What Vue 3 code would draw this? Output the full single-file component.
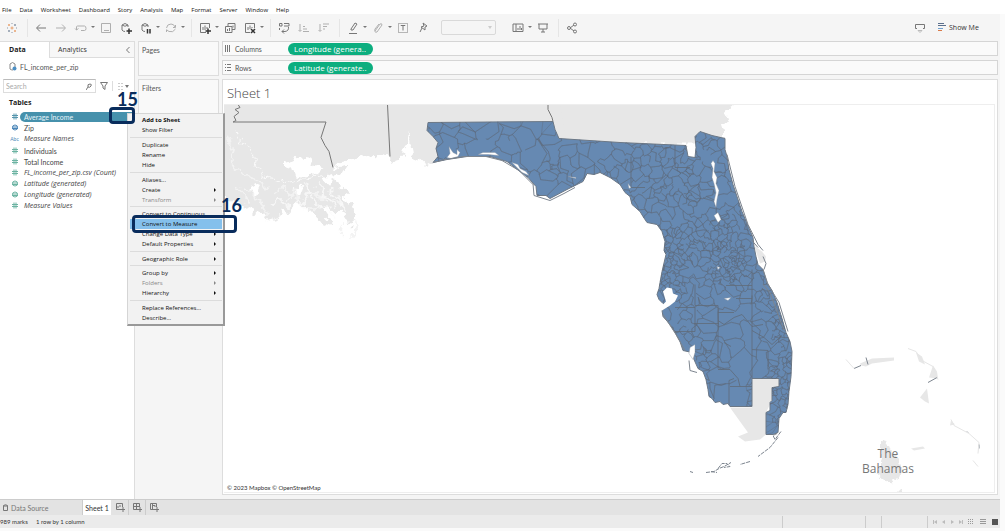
<script setup>
const menus = ['File', 'Data', 'Worksheet', 'Dashboard', 'Story', 'Analysis', 'Map', 'Format', 'Server', 'Window', 'Help']

const tools = [
  { n: 'Start', k: 'logo' }, { sep: true },
  { n: 'Back', k: 'back' }, { n: 'Forward', k: 'forward', dim: true },
  { n: 'Undo', k: 'undo', dim: true, caret: true }, { n: 'Save', k: 'save', dim: true },
  { n: 'New data source', k: 'dbadd' }, { n: 'Pause updates', k: 'dbpause', caret: true },
  { n: 'Refresh', k: 'refresh', dim: true, caret: true }, { sep: true },
  { n: 'New worksheet', k: 'chartadd', caret: true }, { n: 'Duplicate sheet', k: 'dup' },
  { n: 'Clear sheet', k: 'chartclear', caret: true }, { sep: true },
  { n: 'Swap', k: 'swap' }, { n: 'Sort ascending', k: 'asc', dim: true }, { n: 'Sort descending', k: 'desc', dim: true }, { sep: true },
  { n: 'Highlight', k: 'pen', caret: true }, { n: 'Group', k: 'clip', dim: true, caret: true },
  { n: 'Labels', k: 'label' }, { n: 'Pin axes', k: 'pin' }, { select: true },
  { n: 'Cards', k: 'cards', caret: true }, { n: 'Presentation', k: 'present' }, { sep: true },
  { n: 'Share', k: 'share' },
]

const icons = {
  logo: '',
  back: 'M12 7H3M6 3.500L2.500 7L6 10.500',
  forward: 'M2 7H11M8 3.500L11.500 7L8 10.500',
  undo: 'M7 9.500H10.500Q12 9.500 12 7.500Q12 5 10.500 5H3.500Q2.500 5 2.500 6V9M1 7.500L2.500 9L4.500 7.500',
  save: 'M2.500 2.500H11.500V11.500H2.500ZM5 9.500H10',
  dbadd: 'M3 4Q6 1 9 4M3 4V9Q4 10.500 6 10.500M9 4V6M3 4Q6 6.500 9 4',
  dbpause: 'M3 4Q6 1 9 4M3 4V9Q4 10.500 6 10.500M9 4V6M3 4Q6 6.500 9 4',
  refresh: 'M2.500 7Q3 3 7 3Q10 3 11 6M11.500 4V6.500H9M11.500 8Q9 12 5 10.500L3 9M2.500 11V8.500',
  chartadd: 'M8 11.500H2.500V2.500H11.500V7M5 9V6M7 9V4.500M9 8V6',
  dup: 'M5 5V2.500H12V8.500H9M2.500 5.500H9V11.500H2.500ZM4.500 10V8M6.500 10V7M10 6.500V4.500',
  chartclear: 'M7 11.500H2.500V2.500H11.500V7M5 9V6M7 8V4.500M9 7V6',
  swap: 'M2.500 2.500H5V5H2.500ZM7 2.500H12V5H7M2.500 7V9M11.500 6Q12 10 8 10.500L5 10.500M7 8.500L5 10.500L7 12.500',
  asc: 'M3 3V10M1.500 9L3 10.500L4.500 9M6 10.500H12M6 8H10M6 5.500H8',
  desc: 'M3 3V10M1.500 9L3 10.500L4.500 9M6 3H12M6 5.500H10M6 8H8',
  pen: 'M5 8L9 2L11 3L7 9H5ZM3 12.500H11',
  clip: 'M4 10L9 3Q11 2 11 4L6 11Q3 12 4 8L8 3',
  label: 'M5 5V4.500H9V5M7 4.500V9.500',
  pin: 'M7 2L11 5L9 6L9 9L5 6L8 5ZM6 7L4 11',
  cards: 'M2 3H12V10.500H2ZM5 3V10M7 9V7M9 9V5M10.500 9V7',
  present: 'M2 3H12M3 3V8H11V3M7 8V11M5 11H9',
  share: 'M9 4L5 7L9 10M2.500 7A1.500 1.500 0 1 0 5.500 7A1.500 1.500 0 1 0 2.500 7M8.500 3.500A1.500 1.500 0 1 0 11.500 3.500A1.500 1.500 0 1 0 8.500 3.500M8.500 10.500A1.500 1.500 0 1 0 11.500 10.500A1.500 1.500 0 1 0 8.500 10.500',
}

const dims = [
  { t: 'Average Income', k: 'num', sel: true },
  { t: 'Zip', k: 'geo', blue: true },
  { t: 'Measure Names', k: 'abc', it: true },
]
const measures = [
  { t: 'Individuals', k: 'num' },
  { t: 'Total Income', k: 'num' },
  { t: 'FL_income_per_zip.csv (Count)', k: 'num', it: true },
  { t: 'Latitude (generated)', k: 'geo', it: true },
  { t: 'Longitude (generated)', k: 'geo', it: true },
  { t: 'Measure Values', k: 'num', it: true },
]

const groups = [
  [{ t: 'Add to Sheet', b: true }, { t: 'Show Filter' }],
  [{ t: 'Duplicate' }, { t: 'Rename' }, { t: 'Hide' }],
  [{ t: 'Aliases...' }, { t: 'Create', sub: true }, { t: 'Transform', sub: true, off: true }],
  [{ t: 'Convert to Continuous' }, { t: 'Convert to Measure', hot: true }, { t: 'Change Data Type', sub: true }, { t: 'Default Properties', sub: true }],
  [{ t: 'Geographic Role', sub: true }],
  [{ t: 'Group by', sub: true }, { t: 'Folders', sub: true, off: true }, { t: 'Hierarchy', sub: true }],
  [{ t: 'Replace References...' }, { t: 'Describe...' }],
]

const florida = 'M428 123L553 122L555 130L559 139L620 143L686 146L688 157L695 158L696 148L695 137L700 132L712 136L725 139L725 150L727 157L729 170L733 185L742 212L753 238L754 247L756 257L758 265L763 270L767 283L772 291L777 303L782 319L786 333L790 342L792 352L791 377L789 392L788 405L786 413L783 413L779 419L778 433L773 435L766 435V413L770 411V403L772 401V388L779 387V379H752V407H730L728 404L723 405L720 402L715 403L712 399L709 397L708 390L706 380L703 372L698 369L694 360L692 353L683 351L680 342L675 333L670 325L663 317L662 311L667 307L663 304L659 300L657 295L659 289L660 283L662 272L666 255L664 251L665 242L662 232L657 225L647 223L643 217L640 212L632 205L630 197L625 193L620 185L610 178L600 173L594 175L587 174L583 182L567 190L550 199L546 196L537 196L536 187L528 178L520 172L507 162L490 157L467 157L447 160L433 163L438 157L436 149L438 143L433 137L427 131Z'

// Zip code areas: Voronoi cells seeded by [x, y, width, height, count].
let seed = 77
const rnd = () => ((seed = (seed * 16807) % 2147483647) / 2147483647)
const zones = [
  [425, 120, 130, 80, 70], [550, 130, 145, 75, 90], [625, 150, 70, 75, 60], [690, 130, 60, 75, 48],
  [690, 205, 70, 50, 60], [655, 225, 80, 65, 100], [655, 240, 30, 60, 70], [715, 245, 35, 38, 80],
  [690, 285, 85, 95, 30], [665, 300, 40, 60, 38], [692, 350, 30, 50, 22], [760, 260, 15, 60, 35],
  [772, 310, 18, 55, 45], [772, 360, 20, 70, 80],
]
const sites = zones.flatMap(([x, y, w, h, n]) => Array.from({ length: n }, () => [x + rnd() * w, y + rnd() * h]))

// Borders bend at their middle; the bend depends only on the end points, so neighbours agree on it.
const border = (a, b) => {
  const hash = Math.round((a[0] + b[0]) * 7) * 13 + Math.round((a[1] + b[1]) * 7) * 31
  if (hash % 6 === 0) return ''
  const len = Math.hypot(a[0] - b[0], a[1] - b[1]) * 0.3
  const mx = (a[0] + b[0]) / 2 + Math.sin(hash) * len
  const my = (a[1] + b[1]) / 2 + Math.cos(hash * 3) * len
  return `M${a[0].toFixed(1)} ${a[1].toFixed(1)}L${mx.toFixed(1)} ${my.toFixed(1)}L${b[0].toFixed(1)} ${b[1].toFixed(1)}`
}

const cells = sites.map((p) => {
  let poly = [[p[0] - 26, p[1] - 26], [p[0] + 26, p[1] - 26], [p[0] + 26, p[1] + 26], [p[0] - 26, p[1] + 26]]
  for (const q of sites) {
    if (q === p || Math.hypot(q[0] - p[0], q[1] - p[1]) > 74) continue
    const side = (v) => (v[0] - (p[0] + q[0]) / 2) * (q[0] - p[0]) + (v[1] - (p[1] + q[1]) / 2) * (q[1] - p[1])
    const out = []
    poly.forEach((a, i) => {
      const b = poly[(i + 1) % poly.length]
      const da = side(a), db = side(b)
      if (da <= 0) out.push(a)
      if (da * db < 0) {
        const t = da / (da - db)
        out.push([a[0] + (b[0] - a[0]) * t, a[1] + (b[1] - a[1]) * t])
      }
    })
    poly = out
  }
  return poly.map((a, i) => border(a, poly[(i + 1) % poly.length])).join('')
}).join('')
</script>

<template>
  <div class="app">
    <nav class="menubar"><button v-for="m in menus" :key="m">{{ m }}</button></nav>

    <div class="toolbar">
      <template v-for="(t, i) in tools" :key="i">
        <i v-if="t.sep" class="sep"></i>
        <span v-else-if="t.select" class="fit"><select aria-label="Fit"><option></option></select><svg viewBox="0 0 4 3" width="4" height="3"><path d="M0 0H4L2 3Z" /></svg></span>
        <template v-else>
          <button class="tool" :class="{ dim: t.dim }" :aria-label="t.n">
            <svg viewBox="0 0 14 14" width="14" height="14">
              <path :d="icons[t.k]" />
              <g v-if="t.k === 'logo'">
                <path stroke="#e8a06c" d="M7 5.500V8.500M5.500 7H8.500M4 3V5M3 4H5M10 9V11M9 10H11" />
                <path stroke="#8a97a8" d="M10 3V5M9 4H11M4 9V11M3 10H5M7 2V3M7 11V12M2 7H3M11 7H12" />
              </g>
              <path v-if="t.k === 'dbadd' || t.k === 'chartadd'" class="heavy" d="M10 7.500V13M7.500 10H13" />
              <path v-if="t.k === 'dbpause'" class="heavy" d="M8.500 8V12.500M11 8V12.500" />
              <path v-if="t.k === 'chartclear'" class="heavy" d="M8 8L12 12M12 8L8 12" />
              <path v-if="t.k === 'label'" stroke-dasharray="1 1" d="M2.500 2.500H11.500V11.500H2.500Z" />
            </svg>
          </button>
          <button v-if="t.caret" class="drop" :aria-label="t.n + ' options'"><svg viewBox="0 0 4 3" width="4" height="3"><path d="M0 0H4L2 2Z" /></svg></button>
        </template>
      </template>
      <span class="grow"></span>
      <button class="tool tip" aria-label="Guide"><svg viewBox="0 0 14 14" width="14" height="14"><path d="M4 7.500H2.500V3.500H11.500V7.500H10" /><path stroke="#bbb" d="M5 9.500H9L7 11.500Z" /></svg></button>
      <button class="showme">
        <svg viewBox="0 0 8 9" width="8" height="9"><path stroke="#5b6f8c" d="M0 0.500H6M0 2.500H8" /><path stroke="#6fa0cf" d="M0 5.500H5" /><path stroke="#d97b4a" d="M0 7.500H4" /></svg>
        Show Me
      </button>
    </div>

    <main class="work">
      <aside class="side">
        <div class="tabs">
          <button class="on">Data</button>
          <button class="an">Analytics <svg viewBox="0 0 4 6" width="4" height="6"><path d="M3.500 0L0.500 3L3.500 6" /></svg></button>
        </div>
        <div class="source">
          <svg viewBox="0 0 8 9" width="8" height="9"><path d="M1 2Q3.500 -1 6 2V5M1 2V7Q2 8 4 8" fill="none" stroke="#888" /><circle cx="5.500" cy="6.500" r="2" fill="#4b8fc4" stroke="none" /></svg>
          <span>FL_income_per_zip</span>
        </div>
        <div class="find">
          <div class="box">
            <input type="text" placeholder="Search" aria-label="Search" />
            <svg viewBox="0 0 6 7" width="6" height="7"><path d="M2 4L0 7M2 4Q1 1 4 1Q6 1 5 3Q4 5 2 4" /></svg>
          </div>
          <svg viewBox="0 0 8 8" width="8" height="8"><path d="M0.500 0.500H7.500L5 4V7.500L3 6V4Z" /></svg>
          <i></i>
          <svg class="pale" viewBox="0 0 8 8" width="8" height="8"><path d="M1 1.500H3M1 4.500H3M1 7.500H3M4 1.500H6M4 4.500H6M4 7.500H6" /></svg>
          <svg class="solid" viewBox="0 0 4 3" width="4" height="3"><path d="M0 0H4L2 3Z" /></svg>
        </div>
        <h2>Tables</h2>
        <ul v-for="(list, li) in [dims, measures]" :key="li">
          <li v-for="f in list" :key="f.t" :class="{ sel: f.sel, it: f.it, blue: f.blue }">
            <span class="ic">
              <small v-if="f.k === 'abc'">Abc</small>
              <svg v-else-if="f.k === 'num'" viewBox="0 0 6 7" width="6" height="7"><path d="M2 0.500V6.500M4 0.500V6.500M0 2.500H6M0 4.500H6" /></svg>
              <svg v-else viewBox="0 0 6 7" width="6" height="7"><path d="M3 1Q5.500 1 5.500 3.500Q5.500 6 3 6Q0.500 6 0.500 3.500Q0.500 1 3 1ZM0 3H6M0 4.500H6" /></svg>
            </span>
            <span class="name">{{ f.t }}</span>
          </li>
        </ul>
      </aside>

      <section class="cards">
        <div class="card pages">Pages</div>
        <div class="card filters">Filters</div>
      </section>

      <section class="view">
        <div class="shelf">
          <svg viewBox="0 0 6 7" width="6" height="7"><path d="M0.500 0V7M2.500 0V7M4.500 0V7" /></svg>
          <span>Columns</span><button class="pill">Longitude (genera..</button>
        </div>
        <div class="shelf">
          <svg viewBox="0 0 6 7" width="6" height="7"><path d="M0 0.500H1M0 3.500H1M0 6.500H1M2 0.500H6M2 3.500H6M2 6.500H6" /></svg>
          <span>Rows</span><button class="pill">Latitude (generate..</button>
        </div>
        <div class="sheet">
          <h1>Sheet 1</h1>
          <div class="map">
            <svg viewBox="224 105 770 388" preserveAspectRatio="xMidYMid slice">
              <defs>
                <clipPath id="fl"><path :d="florida" /></clipPath>
                <filter id="coast" x="-5%" y="-5%" width="110%" height="110%">
                  <feTurbulence type="fractalNoise" baseFrequency=".12" numOctaves="3" seed="4" />
                  <feDisplacementMap in="SourceGraphic" scale="12" xChannelSelector="R" yChannelSelector="G" />
                </filter>
              </defs>
              <g fill="#e7e7e7" stroke="none" filter="url(#coast)">
                <path d="M214 95H732L730 110L725 113L727 120L722 126L724 132L724 145L559 145L440 140L440 158L431 164L424 166L419 161L412 158L410 139L409 130L408 143L405 147L404 158L396 159L392 163L388 157L380 155L376 158L368 155L361 157L354 160L345 159L338 166L334 169L347 165L342 173L334 177L328 173L320 180L327 184L334 181L344 190L350 195L342 199L351 205L356 219L348 226L347 220L342 212L336 213L329 206L322 210L327 218L334 226L325 229L318 219L308 210L301 204L295 208L289 215L282 211L278 219L268 222L262 213L255 215L251 208L243 206L237 201L231 202L214 196Z" />
                <path d="M881 441L888 443L891 451L899 463L903 472L900 480L892 485L886 480L880 476L878 469L881 456ZM900 489L906 493H899Z" />
                <path d="M352 232L356 220L358 228L352 238ZM338 230L343 224L342 234Z" opacity=".5" />
              </g>
              <g fill="#e7e7e7" stroke="none">
                <path d="M428 106H560L566 142L428 128Z" />
                <path d="M752 379H779V387H772V401L766 413V435L760 440L745 442L738 437L748 433L740 422L730 408H752Z" />
                <path d="M754 246L758 249L762 252L766 257L765 262L760 264Z" />
                <path d="M860 364L872 359L894 358L894 361L872 364L866 367L861 366ZM916 353L922 357L925 365L919 362ZM933 366L937 372L938 379L929 378ZM927 389L929 404L925 402L920 398ZM951 421L955 425L950 426ZM911 449L923 447L925 449L914 451Z" />
              </g>
              <g filter="url(#coast)">
                <path fill="#fff" stroke="none" d="M286 163L293 161L300 157L310 158L315 165L323 169L315 176L303 177L294 176L292 170L286 168ZM300 186L305 191L298 196L294 191ZM254 184L260 187L256 196L250 190Z" />
                <g fill="none" stroke="#fafafa">
                  <path d="M236 132L241 143L251 148L255 158L254 166L261 170L266 178L276 179L287 183L299 180L310 179L320 177L330 175" />
                  <path d="M230 137L233 151L229 163L239 171L249 177L260 182L268 190M244 187L252 194L261 203L267 216M285 201L294 192L302 207L314 211L325 205L335 218M304 185L318 197L329 200L342 204M237 188L245 197L249 205M275 195L284 188L292 199" stroke-width="2" stroke-opacity=".6" />
                  <path d="M308 184L312 200L322 208M318 186L324 196L336 208M328 188L338 198L346 212M270 206L280 200L290 208M310 192L300 204" stroke-width="2" stroke-opacity=".8" />
                </g>
              </g>
              <g fill="none" stroke="#777" stroke-width="1">
                <path d="M238 105L240 108L235 110L239 113L234 117L236 121L233 122.500H326L321 138L325 146L329 152L333 168" />
                <path d="M387.500 105L390 157" /><path d="M548 105L548 110L552 118L553 122" />
              </g>
              <path :d="florida" fill="#6689b2" stroke="#6c7886" stroke-width="1" />
              <g clip-path="url(#fl)" fill="none" stroke="#606b78" stroke-width=".4">
                <path :d="cells" />
                <path d="M695 285V306H718V369M694 324H719M718 313H734M752 270V299H736M752 296V379M752 299L751 305M675 308H695V332H675M718 370H730L738 379L740 387H752M731 347L724 343M734 379L729 381V407M740 387H730M763 325L752 327L742 315L734 318L724 325L718 321M726 286H752M752 331L764 338L772 345L782 336M752 350L768 351V370M631 157V188H645M675 146V168H690" stroke-width=".8" />
              </g>
              <g fill="#fff" stroke="#8993a0" stroke-width=".4">
                <path d="M447 158L450 154L449 147L453 153L457 155V150L460 153L458 157L451 159ZM478 155L483 153L495 153L499 156L488 155ZM512 163L518 165L520 169L526 172L529 176L522 173Z" />
                <path d="M713 161L715 164L714 172L717 178L716 184L719 191L717 200L716 208L714 202L716 193L714 184L712 178L713 169L711 164ZM714 216L718 213L721 220L718 223Z" />
                <path stroke="none" d="M663 292L667 288L672 289L673 294L678 296L675 302L670 306L662 311L660 308L666 302Z" />
                <path d="M690 348L695 345L695 353L693 360L689 354ZM724 299L731 298L728 301ZM628 184L631 188L629 189ZM717 267L720 268L718 270ZM568 177L576 178V179Z" />
              </g>
              <g fill="none" stroke="#7d858f" stroke-width="1">
                <path d="M433 163L445 160L464 157L486 157L502 161L519 171L533 185M533 184L534 196L550 201L564 194L575 188" />
                <path d="M727 155L735 187L748 225L758 245L763 251M763 257L766 264L764 270M763 270L768 285L779 303L788 332M663 315L676 335L685 351M689 361L690 371L697 373M763 285L770 293L784 331M751 240L758 248" />
                <path d="M781 432L775 440L773 436L777 434M778 438L770 448L758 457M750 462L740 465M690 472L693 473M706 473L714 472L719 469L724 467L731 463M718 469L722 464L727 464L730 467L724 468M711 472L717 473" stroke-dasharray="4 1" />
                <path d="M854 369L861 366M866 358L868 365M928 383L937 378M967 432L968 433M979 445V449" />
              </g>
              <path fill="none" stroke="#e6e6e6" d="M846 360L854 369M908 349L916 352L922 361L933 367L938 380M951 420L954 426L969 434L979 443L978 454M973 461L978 467" />
            </svg>
            <p class="bahamas">The<br />Bahamas</p>
            <p class="credit">© 2023 Mapbox © OpenStreetMap</p>
          </div>
        </div>
      </section>
    </main>

    <footer>
      <div class="sheets">
        <button class="ds"><svg viewBox="0 0 5 7" width="5" height="7"><path d="M0.500 1.500Q2.500 0 4.500 1.500V6.500H0.500ZM0.500 2H4.500" /></svg>Data Source</button>
        <button class="cur">Sheet 1</button>
        <button class="add" aria-label="New worksheet"><svg viewBox="0 0 9 9" width="9" height="9"><path d="M5 6.500H0.500V0.500H6.500V4M2 5V3M4 4V2M7 4V9M4.500 6.500H9" /></svg></button>
        <button class="add" aria-label="New dashboard"><svg viewBox="0 0 9 9" width="9" height="9"><path d="M5 6.500H0.500V0.500H6.500V4M3.500 1V6M1 3.500H6M7 4V9M4.500 6.500H9" /></svg></button>
        <button class="add last" aria-label="New story"><svg viewBox="0 0 9 9" width="9" height="9"><path d="M5 6.500H0.500V0.500H6.500V4M2.500 0V6M3 2.500H5V4M7 4V9M4.500 6.500H9" /></svg></button>
      </div>
      <div class="status">
        <span class="marks">989 marks</span><span>1 row by 1 column</span>
        <i class="w1"></i><i class="w2"></i><i class="w3"></i>
        <div class="nav">
          <svg viewBox="0 0 30 6" width="30" height="6"><path d="M0 1H1V5H0ZM4 1V5L1 3ZM12 1V5L9 3ZM18 1V5L21 3ZM26 1V5L29 3ZM29 1H30V5H29Z" fill="#bbb" /></svg>
          <svg viewBox="0 0 30 6" width="30" height="6"><path d="M0 0.500H6M0 2.500H6M0 4.500H6" stroke="#999" stroke-dasharray="1 1" /><path d="M12 0.500H18M12 2.500H18M12 4.500H18" stroke="#999" /><path d="M24 0H30V6H24Z" fill="#555" /></svg>
        </div>
      </div>
    </footer>

    <div class="context" role="menu">
      <div v-for="(g, gi) in groups" :key="gi" class="group">
        <button v-for="m in g" :key="m.t" role="menuitem" :class="{ b: m.b, off: m.off, hot: m.hot }">
          {{ m.t }}<svg v-if="m.sub" viewBox="0 0 2 4" width="2" height="4"><path d="M0 0V4L2 2Z" /></svg>
        </button>
      </div>
    </div>
    <div class="frame f15"></div><b class="step s15">15</b>
    <div class="frame f16"></div><b class="step s16">16</b>
  </div>
</template>

<style>
html, body, #app { height: 100%; }
body { margin: 0; background: #fafafa; }
</style>

<style scoped>
* { box-sizing: border-box; }
.app { position: relative; height: 100%; padding: 0 5px 3px 0; display: flex; flex-direction: column; overflow: hidden; font: 7px/10px Lato, "Noto Sans", sans-serif; color: #333; }
button, input, select { font: inherit; color: inherit; border: 0; background: none; padding: 0; margin: 0; }
svg { flex: none; fill: none; stroke: #777; }
.menubar { display: flex; height: 14px; padding: 5px 0 0 2px; gap: 8px; background: #fff; margin-right: -5px; flex: none; color: #111; font: 6px/10px "Open Sans", sans-serif; }
.toolbar { display: flex; align-items: center; height: 27px; flex: none; padding-left: 2px; background: #f5f5f5; }
.tool { width: 20px; height: 20px; display: flex; align-items: center; justify-content: center; }
.tool svg { stroke: #777; stroke-width: 1; }
.dim { opacity: .55; }
.heavy { stroke: #333; stroke-width: 1.5; }
.drop { width: 5px; display: flex; }
.drop svg, .solid, .fit svg { fill: #777; stroke: none; }
.sep { width: 1px; height: 18px; background: #e5e5e5; margin: 0 3px 0 5px; }
.fit { display: flex; align-items: center; width: 55px; height: 15px; margin: 0 12px 0 8px; padding-right: 3px; border: 1px solid #d9d9d9; border-radius: 2px; }
.fit select { flex: 1; min-width: 0; appearance: none; }
.fit svg { fill: #ccc; }
.grow { flex: 1; }
.tip { margin-right: 8px; }
.showme { display: flex; align-items: center; gap: 3px; width: 62px; font-family: "Open Sans", sans-serif; }
.work { flex: 1; min-height: 0; display: flex; background: #f5f5f5; }
.side { width: 135px; flex: none; background: #fff; border-right: 1px solid #ddd; }
.tabs { display: flex; height: 17px; border-top: 1px solid #ddd; font-family: "Open Sans", sans-serif; }
.tabs .on { width: 49px; text-align: left; padding-left: 9px; font-weight: 700; color: #222; }
.tabs .an { flex: 1; display: flex; align-items: center; justify-content: space-between; padding: 0 4px 0 8px; background: #f7f7f7; border: solid #ddd; border-width: 0 0 1px 1px; }
.source { display: flex; align-items: center; gap: 3px; height: 17px; padding-left: 9px; color: #555; }
.find { display: flex; align-items: center; gap: 4px; padding: 4px 0 0 3px; }
.box { display: flex; align-items: center; width: 93px; height: 14px; border: 1px solid #ddd; border-top-color: #bbb; padding: 0 3px 0 2px; }
.box input { flex: 1; min-width: 0; outline: 0; }
.box input::placeholder { color: #aaa; }
.find i { width: 1px; height: 10px; background: #ddd; }
.find .pale { stroke: #ccc; margin-right: -4px; }
h2 { margin: 5px 0 3px 9px; font: 700 7px/10px "Open Sans", sans-serif; color: #222; }
ul { list-style: none; margin: 0 0 1px; padding: 0; }
li { display: flex; align-items: center; height: 11px; padding-left: 9px; color: #444; white-space: nowrap; }
.ic { width: 11px; display: flex; justify-content: center; }
.ic svg { stroke: #6bb3a2; }
.sel .ic svg { stroke: #5595ad; }
.blue .ic svg { stroke: #4b86b8; }
.ic small { font-size: 5px; color: #4b86b8; }
.name { flex: 1; padding-left: 4px; line-height: 10px; }
.it .name { font-family: "Open Sans", sans-serif; font-style: italic; }
.sel .name { background: #4691ac; color: #e8f5fa; border-radius: 5px 0 0 5px; }
.cards { width: 87px; flex: none; padding: 0 3px 0 3px; }
.card { border: 1px solid #ddd; background: #f9f9f9; padding: 3px; color: #555; margin-bottom: 3px; }
.pages { height: 35px; }
.filters { height: 52px; }
.view { flex: 1; min-width: 0; display: flex; flex-direction: column; gap: 4px; padding: 0 2px 4px 0; }
.shelf { display: flex; align-items: center; height: 15px; border: 1px solid #d5d5d5; background: #fafafa; padding-left: 2px; flex: none; }
.shelf span { width: 57px; padding-left: 4px; color: #555; }
.pill { width: 85px; height: 12px; border-radius: 6px; background: #0cae7f; color: #fff; font: 8px/12px "Open Sans", sans-serif; text-align: left; padding-left: 6px; white-space: nowrap; }
.sheet { flex: 1; min-height: 0; display: flex; flex-direction: column; background: #fff; border: 1px solid #ddd; }
h1 { margin: 3px 0 1px 4px; font: 300 13px/20px "Open Sans", sans-serif; color: #444; }
.map { position: relative; flex: 1; min-height: 0; margin: 0 2px 1px 1px; border: solid #eee; border-width: 1px 1px 1px 0; }
.map > svg { position: absolute; width: 100%; height: 100%; }
.bahamas { position: absolute; left: 638px; top: 341px; margin: 0; font: 12px/15px "Open Sans", sans-serif; text-align: center; color: #777; }
.credit { position: absolute; left: 3px; bottom: -1px; margin: 0; font-size: 6px; color: #333; }
footer { flex: none; background: #ebebeb; }
.sheets { display: flex; height: 16px; background: #e3e3e3; border-top: 1px solid #ccc; }
.ds { width: 83px; display: flex; align-items: center; gap: 3px; padding-left: 3px; color: #777; border-right: 1px solid #ccc; }
.cur { width: 28px; background: #fff; margin-right: 1px; }
.add { width: 17px; display: flex; align-items: center; justify-content: center; border-right: 1px solid #ccc; }
.last { border: 0; }
.status { display: flex; align-items: center; height: 13px; font-size: 6px; white-space: nowrap; }
.marks { width: 36px; }
.status i { height: 12px; border-left: 1px solid #ccc; }
.w1 { width: 83px; margin-left: auto; }
.w2 { width: 16px; }
.w3 { width: 46px; }
.nav { width: 73px; height: 12px; display: flex; align-items: center; justify-content: space-between; border-left: 1px solid #ccc; padding: 0 2px 0 5px; }
.nav svg { stroke: none; }
.context { position: absolute; left: 127px; top: 113px; width: 98px; padding: 1px 1px 1px 2px; background: #f2f2f2; border: 1px solid #d5d5d5; border-right: 2px solid #999; border-bottom: 2px solid #999; color: #111; }
.group { display: flex; flex-direction: column; }
.group + .group { margin-top: 2px; padding-top: 2px; border-top: 1px solid #dcdcdc; }
.group:nth-child(2n+4) { margin-top: 1px; }
.context button { display: flex; align-items: center; justify-content: space-between; height: 10px; padding: 0 6px 0 12px; white-space: nowrap; font: 6px/10px "Open Sans", sans-serif; }
.context svg { fill: #111; stroke: none; }
.context .off { color: #888; }
.context .off svg { fill: #888; }
.context .b { font-weight: 700; }
.context .hot { background: #84c0ec; }
.frame { position: absolute; border: 3px solid #092c5c; border-radius: 4px; }
.f15 { left: 109px; top: 107px; width: 26px; height: 17px; }
.f16 { left: 132px; top: 215px; width: 105px; height: 18px; }
.step { position: absolute; font: 700 18px/18px Lato, sans-serif; color: #092c5c; }
.s15 { left: 117px; top: 90px; }
.s16 { left: 221px; top: 196px; }
</style>
